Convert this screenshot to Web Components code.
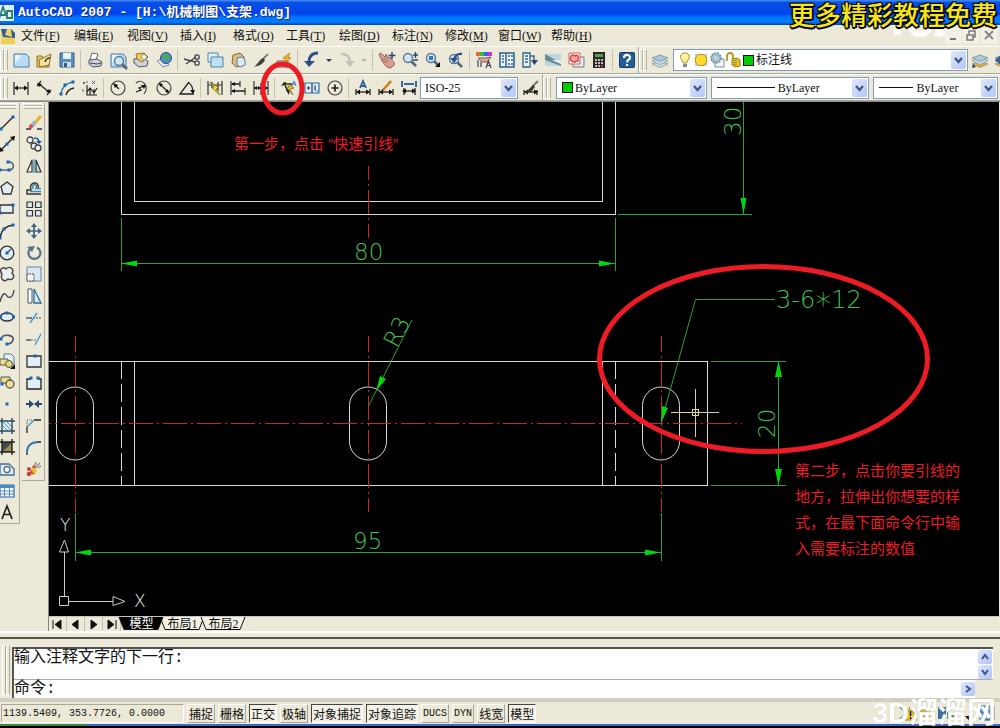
<!DOCTYPE html>
<html lang="zh-CN">
<head>
<meta charset="utf-8">
<title>AutoCAD 2007 - [H:\机械制图\支架.dwg]</title>
<style>
html,body{margin:0;height:100%;background:#000;overflow:hidden}
body{font-family:"Liberation Serif","Noto Sans CJK SC",sans-serif;font-size:12px;color:#111}
</style>
</head>
<body>
<cad-app></cad-app>
<script>
const BLUE = '#1766b8', NAVY = '#27476f', INK = '#222';
const dot = (x, y, c = BLUE) => `<rect x="${x - 1.5}" y="${y - 1.5}" width="3" height="3" fill="${c}"/>`;
const line = (d, c = INK, w = 1.3, f = 'none') => `<path d="${d}" stroke="${c}" stroke-width="${w}" fill="${f}"/>`;
const page = '<path d="M1 2h12l3 3v10H1z" fill="#b9dcf5" stroke="#4a7fae"/><path d="M2 3h7L2 11z" fill="#eaf6ff"/>';
const hArrow = y => line(`M2 ${y}H14`) + `<path d="M1 ${y}l4-2.5v5zM15 ${y}l-4-2.5v5z" fill="#111"/>`;
const lens = (x, y) => line(`M${x + 3} ${y + 3}L${x + 8} ${y + 8}`, '#54677d', 2.6) + `<circle cx="${x}" cy="${y}" r="4.5" fill="#cfe6f5" stroke="#5d7893" stroke-width="1.4"/>`;
const layers = (c) => `<path d="M0 12l8-3 8 3-8 3.500z" fill="${c}" stroke="#777" stroke-width=".6"/><path d="M0 9l8-3 8 3-8 3.500z" fill="#cfe0e6" stroke="#6b8494" stroke-width=".6"/><path d="M0 6l8-3 8 3-8 3.500z" fill="#a9c9da" stroke="#58788c" stroke-width=".6"/>`;

const ICONS = {
  new: page,
  open: '<path d="M1 4h5l1 2h6v9H1z" fill="#e9c65c" stroke="#8d712a"/><path d="M3 8l12-6-2 11-9 2z" fill="#f6e4a0" stroke="#8d712a"/><path d="M9 10c1-3 3-4 5-4" stroke="#333" fill="none" stroke-width="1.500"/>',
  save: '<path d="M1 1h14v14H1z" fill="#5c8fc4" stroke="#2d5b8d"/><path d="M4 1h8v6H4z" fill="#e8f3fb"/><path d="M4 10h8v5H4z" fill="#d3dde8"/><path d="M5 11h3v4H5z" fill="#2d5b8d"/>',
  print: '<path d="M5 1l6 1-2 6H3z" fill="#fff" stroke="#667"/><path d="M2 8l8-1 5 3-1 4-8 1-4-3z" fill="#ccd2dc" stroke="#556"/><path d="M3 11l7 1 4-1" stroke="#445" fill="none"/>',
  preview: page + lens(9, 9),
  publish: '<path d="M1 7l9-1 5 3-1 5-8 1-5-4z" fill="#ccd2dc" stroke="#556"/><path d="M3 2l8-1 4 4-6 5-5-3z" fill="#f0c95a" stroke="#8d712a"/><circle cx="11" cy="5" r="2.500" fill="#fff" stroke="#996"/>',
  dwf: '<path d="M1 9l7-3 5 7-6 2z" fill="#e6e6ec" stroke="#889"/><circle cx="10" cy="6" r="5.500" fill="#4a91d0" stroke="#27527c"/><path d="M7 3c3-2 4 1 6 0 1 3-2 3-2 6-3 0-2-3-5-3z" fill="#57a84d"/>',
  cut: line('M0 7l11 3M2 12l10-7', '#444', 1.4) + '<circle cx="13" cy="5" r="2.200" fill="none" stroke="#445" stroke-width="1.300"/><circle cx="13" cy="11" r="2.200" fill="none" stroke="#445" stroke-width="1.300"/>',
  copyclip: '<path d="M1 1h10v9H1z" fill="#dff0fa" stroke="#4a87a8"/><path d="M4 5h12v10H4z" fill="#bfe1f3" stroke="#4a87a8"/>',
  paste: '<path d="M3 3l7-2 4 4v8l-8 2-4-4z" fill="#dcc080" stroke="#86692f"/><path d="M7 6l5-1 3 3v5l-5 2-3-2z" fill="#dcebf7" stroke="#5b7898"/>',
  match: line('M15 2L9 8', '#666', 1.6) + '<path d="M10 6l2 2c-2 4-6 6-11 7 4-3 5-7 9-9z" fill="#443f3b"/>',
  blocked: '<path d="M1 9h11v6H1z" fill="#fff" stroke="#555"/><path d="M14 1L7 6l3 1-4 6 9-7-3-1z" fill="#f4b51c" stroke="#9a6712" stroke-width=".6"/>',
  undo: line('M14 1C8 1 5 4 5 10', '#2e5087', 2.8) + '<path d="M0 9l11 0-6 6z" fill="#2e5087"/>',
  redo: line('M2 2c6 0 9 3 9 8', '#c2c2bb', 2.6) + '<path d="M16 9H6l5 6z" fill="#c2c2bb"/>',
  tri: '<path d="M5 7h6l-3 3z" fill="#2b3f66"/>',
  tridim: '<path d="M5 7h6l-3 3z" fill="#b5b4ab"/>',
  pan: '<path d="M0 2l2-1 4 4 1-3 2 4 2-1 5 7-4 4c-5 0-7-4-9-7z" fill="#d99c92" stroke="#845048" stroke-width=".8"/>' + line('M3 7l4 4M6 6l3 4', '#845048', .8) + line('M13 0v7M9.500 3.500h7', NAVY, 1.5),
  zoomrt: lens(6, 6) + line('M11 3h5M13.500 0v6M11 8h5', NAVY, 1.4),
  zoomwin: lens(6, 6) + '<path d="M4 4h4v4H4z" fill="#3778b0"/><path d="M15 10v5h-5z" fill="#111"/>',
  zoomprev: lens(6, 7) + line('M14 2C9 1 7 4 6 8', '#2e5087', 2.3) + '<path d="M2 6h8l-4 5z" fill="#2e5087"/>',
  props: '<path d="M0 0h4v4H0z" fill="#e63"/><path d="M4 0h4v4H4z" fill="#3b3"/><path d="M8 0h4v4H8z" fill="#36e"/><path d="M12 0h4v4h-4z" fill="#c3c"/><path d="M2 6h8l5-1-4 5-5 0z" fill="#e0a79c" stroke="#855"/>' + line('M2 8v7M5 10v5M10 16l2.500-7 2.500 7M11 13.500h3', '#345', 1.2),
  dcenter: '<path d="M1 1h14v14H1z" fill="#e9f3fa" stroke="#27618f" stroke-width="1.500"/>' + line('M7 1v14M3 4h2M3 7h2M3 10h2M9 4h2M12 4h2M9 8h2M12 8h2M9 12h2M12 12h2', '#3c6286', 1.5),
  palette: '<path d="M1 1h7v14H1z" fill="#e9f3fa" stroke="#27618f" stroke-width="1.300"/>' + line('M3 4h3M3 7h3M3 10h3M8 4h4v5', '#3c6286', 1.4) + '<path d="M9 8h7l-3.500 5z" fill="#27476f"/>',
  sheet: '<path d="M0 2h16v12H0z" fill="#bdd5e1"/><path d="M0 2l16 9v3L0 8z" fill="#6a8b96"/><path d="M7 8h9v4z" fill="#e7eef0"/>',
  markup: '<path d="M5 5h11v10H5z" fill="#e3ebf2" stroke="#6d7f92"/><path d="M1 1h11v11H1z" fill="#fff" stroke="#d55"/><path d="M3 4c1-2 3-1 4 0 2-2 4 0 3 2 1 2 0 4-2 3-1 2-3 1-4 0-2 0-2-3-1-5z" fill="#f7a9a2" stroke="#d33" stroke-width="1.300"/>',
  calc: '<path d="M2 0h12v16H2z" fill="#2c2626"/><path d="M4 2h8v3H4z" fill="#55a04a"/>' + line('M4 8h2M7 8h2M10 8h2M4 11h2M7 11h2M10 11h2M4 14h2M7 14h2', '#eee', 1.6) + line('M10 14h2', '#e33', 1.6),
  help: '<rect x="0.500" y="0.500" width="15" height="15" rx="1" fill="#235d98" stroke="#123f70"/>' + line('M5 6c0-4 6-4 6-.5C11 8 8 7.500 8 10.500', '#fff', 2.2) + '<rect x="7" y="12" width="2.200" height="2" fill="#fff"/>',
  layer: layers('#c9dbe2'),
  layerset: layers('#e0b13a') + '<path d="M0 16l1-4 3 3z" fill="#223a60"/>',
  layerprev: layers('#e0b13a') + '<path d="M0 8l6-5v10z" fill="#2c5f9f"/>',
  linear: line('M1 2v13M15 2v13', '#333') + hArrow(8),
  aligned: line('M1 6l4-5M11 15l4-5', '#333') + line('M3 4l10 8') + '<path d="M1 3l5 1-3 3zM15 13l-5-1 3-3z" fill="#111"/>',
  arclen: line('M2 14C3 6 7 3 14 2', '#2b78ba') + line('M7 15c1-4 3-6 8-7') + dot(2, 14) + dot(14, 2) + dot(6, 5),
  ordinate: line('M5 5v10h10M5 12l3-4 4 5 3-5M8 15V9M12 15V9', INK, 1.2) + line('M1 2l2 2M3 2L1 4M10 1l3 3M13 1l-3 3M1 9v3M5 1v2', '#567', 1),
  radius: '<circle cx="8" cy="8" r="7" fill="none" stroke="#444" stroke-width="1.200"/>' + line('M9 9L5 5') + '<path d="M3 3l5 2-3 3z" fill="#111"/>',
  jogged: line('M3 3c6-5 14 3 8 11', '#444', 1.2) + line('M3 12l5-2-2-2 5-2') + '<path d="M13 5l-5 0 3 4z" fill="#111"/>',
  diameter: '<circle cx="8" cy="8" r="7" fill="none" stroke="#444" stroke-width="1.200"/>' + line('M4 4l8 8') + '<path d="M3 3l4 1-3 3zM13 13l-4-1 3-3z" fill="#111"/>',
  angular: line('M15 14H1L10 2') + line('M10 3c3 2 4 6 4 10', INK, 1.1) + '<path d="M14 14l-3-4h5z" fill="#111"/>',
  quickdim: line('M1 1v14M15 1v14M1 5h14M5 2v6M11 2v9', '#333', 1.2) + '<path d="M3 2l9 6-3 1 4 6-8-7 2-1z" fill="#f3dc27" stroke="#665d10" stroke-width=".7"/>',
  baseline: line('M1 1v14M10 1v6M15 8v7', '#444') + line('M2 4h8M2 11h13') + '<path d="M1 4l4-2v4zM1 11l4-2v4z" fill="#111"/>',
  continue: line('M1 1v14M8 3v12M15 1v14', '#444') + line('M1 8h14') + '<path d="M1 8l3-2v4zM8 8l-3-2v4zM8 8l3-2v4zM15 8l-3-2v4z" fill="#111"/>',
  qleader: line('M4 4h7M4 5l3 7', INK, 1.5) + '<path d="M0 6l3-4 4 2zM8 15l-3-5 4-1z" fill="#222"/><path d="M4 2l9 6-4 1 3 6-6-7 2-1z" fill="#e3c42c" stroke="#6c5d0e" stroke-width=".7"/>' + line('M11 6l2-5 2 5M12 4h3', '#3a78bb', 1),
  tolerance: '<path d="M1 3h14v10H1z" fill="#dceefa" stroke="#2f71a8" stroke-width="1.200"/>' + line('M8 3v10M11 5.500v5M13 10.500v1M3 8h3M4.500 6.500v3', '#235', 1.2),
  center: '<circle cx="8" cy="8" r="7" fill="none" stroke="#444" stroke-width="1.200"/>' + line('M4.500 8h7M8 4.500v7', INK, 1.7),
  dimtext: line('M1 9v6M15 9v6') + hArrow(12) + line('M5 8l3-7 3 7M6 6h4', '#2d6097', 1.8),
  dimedit: line('M1 9v6M15 9v6') + hArrow(12) + line('M5 10l8-9', '#c9821c', 2.6) + '<path d="M3 12l1-3 2 2z" fill="#333"/>',
  dimupdate: line('M1 1v6M15 1v6M3 4h10', '#356da1', 2) + line('M3 8v7M14 8v7') + hArrow(11),
  dimstyle: line('M1 10v5M14 10v5') + hArrow(12) + line('M15 1l-6 6', '#777', 2) + '<path d="M10 5l2 2-4 5-6 1z" fill="#3d3832"/>',
  bulb: '<path d="M8 1c6 0 5 6 2 8v2H6V9C3 7 2 1 8 1z" fill="#fff69a" stroke="#a49134"/><path d="M6 12h4v3H6z" fill="#889"/>',
  sun: '<path d="M2 2h12v12H2z" fill="#b9d2dc"/><circle cx="8" cy="8" r="5.800" fill="#fbd92e" stroke="#c98f16"/>',
  freeze: '<path d="M6 7h9v8H6z" fill="#f2f7f9" stroke="#71909c"/><circle cx="7" cy="6" r="5" fill="#9fbfce" stroke="#6a8f9f" stroke-width="1.500" stroke-dasharray="2 1"/><circle cx="7" cy="6" r="2" fill="#c9d8c4"/>',
  lock: line('M2 9V4c0-4 6-4 6 0v3', '#b79a1a', 1.8) + '<path d="M7 7l5-1 3 2v6l-5 1-3-2z" fill="#ecc92d" stroke="#927813"/>' + line('M8 9l4-1M8 11l4-1M8 13l4-1', '#927813', .8),
  lineseg: line('M2 14L14 2') + dot(2, 14) + dot(14, 2),
  xline: line('M1 15L15 1') + '<path d="M0 16l1-5 4 4zM16 0l-5 1 4 4z" fill="#111"/>' + dot(8, 8),
  pline: line('M1 12h9M9 4c7-1 7 8 1 8', '#567', 1.6) + dot(9, 4) + dot(1, 12) + dot(10, 12),
  polygon: '<path d="M8 2l6 4.500-2 7.500H4L2 6.500z" fill="#e3eef4" stroke="#333" stroke-width="1.300"/>',
  rect: '<path d="M1 4h13v8H1z" fill="#e3eef4" stroke="#333" stroke-width="1.300"/>' + dot(14, 4) + dot(1, 12),
  arc: line('M1 15C2 8 6 3 14 2') + dot(1, 15) + dot(5, 6) + dot(14, 2),
  circle: '<circle cx="8" cy="8" r="6.800" fill="#e3eef4" stroke="#333" stroke-width="1.300"/>' + line('M8 8l4-4', '#456') + dot(8, 8) ,
  cloud: '<path d="M3 8C-1 3 5 0 7 3c4-4 9 1 6 4 4 4 0 8-4 6-4 4-8 0-6-5z" fill="#e8edf0" stroke="#444" stroke-width="1.400"/>',
  spline: line('M1 14C4 2 7 6 8 8s6 3 7-6', '#444'),
  ellipse: '<ellipse cx="8" cy="8" rx="6.500" ry="4" fill="#e3eef4" stroke="#333" stroke-width="1.300"/>' + dot(1.5, 8) + dot(14.5, 8) + dot(8, 4),
  ellarc: line('M2 8c2-6 14-4 12 1-1 3-4 4-6 4', '#556', 1.7) + dot(2, 8) + dot(8, 13),
  insblock: '<path d="M5 1h7l3 3v7H5z" fill="#e7f2fb" stroke="#4b7fa8"/><path d="M1 6h8v6H1z" fill="#f0e08b" stroke="#555"/><circle cx="10" cy="11" r="3.500" fill="#ead96d" stroke="#555"/><path d="M16 11v5h-5z" fill="#111"/>',
  mkblock: '<path d="M2 3h9v6H2z" fill="#f0e08b" stroke="#555"/><circle cx="11" cy="10" r="4" fill="#f0e08b" stroke="#555" stroke-width="1.300"/>' + dot(3, 10),
  point: dot(8, 8),
  hatch: '<path d="M3 3h10v10H3z" fill="#d9ecf5"/>' + line('M4 4l8 8M4 8l5 5M8 4l5 5', '#5c90ad', 1) + line('M0 3h16M0 13h16M3 0v16M13 0v16', '#2a4c60', 1.4),
  gradient: '<path d="M3 3h10v10H3z" fill="#454a4b"/><path d="M4 12l9-8v9z" fill="#9b8e51"/>' + line('M0 3h16M0 13h16M3 0v16M13 0v16', '#222', 1.4),
  region: '<path d="M1 3h9l5 5v6H1z" fill="#dceefa" stroke="#4b6e88" stroke-width="1.300"/><circle cx="8" cy="8.500" r="3" fill="#fff" stroke="#4b6e88" stroke-width="1.300"/>',
  table: '<path d="M1 2h14v12H1z" fill="#fff" stroke="#2b66a5" stroke-width="1.200"/><path d="M1 2h14v3H1z" fill="#4d8ac2"/>' + line('M1 8h14M1 11h14M5.500 5v9M10.500 5v9', '#4d8ac2', 1),
  mtext: line('M3 15L8 2l5 13M5 10.500h6', '#222', 1.7),
  erase: line('M0 14h5M11 14h5', '#333') + line('M15 1L8 9', '#e5b33a', 3.4) + line('M9 7l-3 4', '#8fb8d8', 4) + line('M6 10l-2 3', '#d9534a', 4),
  copy: '<circle cx="4" cy="4" r="3" fill="#e8f0f4" stroke="#444" stroke-width="1.300"/><circle cx="8" cy="10" r="3" fill="#e8f0f4" stroke="#444" stroke-width="1.300"/><circle cx="12" cy="12" r="3" fill="#e8f0f4" stroke="#444" stroke-width="1.300"/>' + line('M8 2c3 0 5 1 5 4', BLUE, 1.7) + '<path d="M10 5h6l-3 3z" fill="#174f8c"/>',
  mirror: line('M8 1v14', '#3aa0c8', 1.4) + '<path d="M6 2v12H1z" fill="#f4f4f0" stroke="#333" stroke-width="1.200"/><path d="M10 2v12h5z" fill="#c8dce6" stroke="#333" stroke-width="1.200"/>',
  offset: line('M15 14H1v-4h4C2 1 14 1 12 8', '#333', 1.4) + line('M15 11.500H4M7 9c-2-6 5-6 3-.5h5', '#3d8cb5', 1.5),
  array: '<g fill="#dceaf5" stroke="#333" stroke-width="1.200"><path d="M1 1h5.500v5.500H1zM9.500 1H15v5.500H9.500zM1 9.500h5.500V15H1zM9.500 9.500H15V15H9.500z"/></g>',
  move: line('M8 2v12M2 8h12', '#3e6484', 1.7) + '<path d="M8 0l3 4H5zM8 16l3-4H5zM0 8l4-3v6zM16 8l-4-3v6z" fill="#3e6484"/>',
  rotate: line('M5 3a6 6 0 1 0 6-.5', '#55738c', 2.2) + '<path d="M1 2l8-1-3 6z" fill="#55738c"/>',
  scale: '<path d="M1 1h14v14H1z" fill="#dbe6f2" stroke="#6483a6"/><path d="M1 8h7v7H1z" fill="#f4f4f0" stroke="#333" stroke-dasharray="1.500 1"/>',
  stretch: '<path d="M2 1h4v14H2z" fill="#fff" stroke="#456"/><path d="M8 1l7 14H8z" fill="#dceefa" stroke="#2d6c9f" stroke-width="1.300"/>',
  trim: line('M0 8h6', '#345') + line('M7 8h9', '#345', 1.2).replace('fill=', 'stroke-dasharray="2 1" fill=') + line('M4 13l7-10', '#3d9bd0', 1.4),
  extend: line('M0 9h5', '#345') + line('M5 9h6', '#678', 1.2).replace('fill=', 'stroke-dasharray="2 1" fill=') + line('M9 14l6-11', '#3d9bd0', 1.4),
  breakpt: '<path d="M1 3h14v11H1z" fill="#e1eff9" stroke="#333" stroke-width="1.300"/>' + dot(9, 3),
  break: '<path d="M1 4h14v10H1z" fill="#e1eff9"/>' + line('M5 4H1v10h14V4h-3') + dot(5, 3) + dot(12, 3),
  join: line('M0 8h4M12 8h4', NAVY, 2) + '<path d="M3 4l5 4-5 4zM13 4L8 8l5 4z" fill="#27476f"/>',
  chamfer: line('M1 15V9M8 2h7') + line('M1 9l7-7', '#3d9bd0', 1.4) + line('M1 8V2h6', '#555', 1).replace('fill=', 'stroke-dasharray="1 1" fill='),
  fillet: line('M1 15v-3M12 2h3') + line('M1 12C1 6 5 2 12 2', '#2f78ad', 1.8),
  explode: '<g fill="#cf3b2c"><circle cx="3" cy="8" r="2"/><circle cx="7" cy="11" r="2.400"/><circle cx="3" cy="13" r="2.200"/><circle cx="8" cy="6" r="1.700"/></g><path d="M6 8l4-2 1 4-4 3z" fill="#f2c22e"/>' + line('M9 7l5-5M12 7l3-2M9 4l1-3', '#888', 1.5),
  doc: '<path d="M1 1h11l3 4v11H1z" fill="#f1d064"/><path d="M1 1h6l-2 6 7 2-1-8 4 4v5L3 9z" fill="#28629d"/><path d="M1 12l14-2v6H1z" fill="#f2ce57"/>',
  app: '<path d="M0 0h16v16H0z" fill="#e0f2ee"/>' + line('M1 14L5 2l3 8M2 10h6M9 6h5v7H9z', '#267a7a', 1.8),
};

function define(name, html, ready) {
  const template = document.createElement('template');
  template.innerHTML = html;
  customElements.define(name, class extends HTMLElement {
    constructor() {
      super();
      this.attachShadow({ mode: 'open' }).append(template.content.cloneNode(true));
    }
    connectedCallback() { if (ready && !this.done) { this.done = true; ready(this, this.shadowRoot); } }
  });
}

define('cad-icon', `<style>:host{display:block;width:16px;height:16px;flex:none}svg{display:block;width:100%;height:100%;overflow:visible}</style>
<svg viewBox="0 0 16 16" aria-hidden="true"></svg>`,
  (el, root) => { root.querySelector('svg').innerHTML = ICONS[el.getAttribute('name')]; });

define('cad-tool', `<style>
:host{display:block;flex:none;width:23px;height:20px}
:host([narrow]){width:12px}
button{display:flex;align-items:center;justify-content:center;width:100%;height:100%;padding:0;border:0;background:none;overflow:visible}
</style><button type="button"></button>`,
  (el, root) => {
    const button = root.querySelector('button');
    button.setAttribute('aria-label', el.getAttribute('name'));
    button.innerHTML = `<cad-icon name="${el.getAttribute('name')}"></cad-icon>`;
  });

/* A toolbar with a grip, filled from its tools attribute: "|" is a separator. */
define('cad-toolbar', `<style>
:host{display:flex;align-items:center;box-sizing:border-box;background:#ece9d8;border-top:1px solid #fff;border-bottom:1px solid #aca899;min-width:0}
.grip{flex:none;width:2px;height:20px;border:1px solid #fff;border-right-color:#b5b2a2}
.grip+.grip{margin-right:1px}
.sep{flex:none;width:1px;height:20px;margin:0 2px;background:#c5c2b3}
:host([vertical]){flex-direction:column;border:0;border-right:1px solid #aca899;border-bottom:1px solid #aca899}
:host([vertical]) .grip{width:18px;height:1px;border:1px solid #fff;border-bottom-color:#b5b2a2;margin:0}
.tools{display:contents}
:host([vertical]) .tools{display:grid;grid-auto-rows:1fr;width:100%;height:var(--run);justify-items:center;align-items:center;margin-top:3px}
</style><span class="grip"></span><span class="grip"></span><div class="tools"></div><slot></slot>`,
  (el, root) => {
    root.querySelector('.tools').innerHTML = (el.getAttribute('tools') || '').split(' ').filter(Boolean).map(t =>
      t === '|' ? '<span class="sep"></span>' : `<cad-tool name="${t}" ${t.startsWith('tri') ? 'narrow' : ''}></cad-tool>`).join('');
  });

define('cad-combo', `<style>
:host{display:grid;box-sizing:border-box;height:22px;min-width:0;border:1px solid #7f9db9;background:#fff;align-items:center}
select,.lead,.arrow{grid-area:1/1}
select{appearance:none;width:100%;height:20px;border:0;background:none;margin:0;padding:0 18px 0 var(--indent,4px);font:inherit;font-size:12px;color:#111;outline:0}
.lead{display:flex;align-items:center;padding-left:3px;pointer-events:none}
.arrow{justify-self:end;width:15px;height:18px;margin-right:1px;border-radius:2px;background:linear-gradient(135deg,#e0e9ff,#b4c5f6);pointer-events:none}
</style><select></select><span class="lead"><slot></slot></span>
<svg class="arrow" viewBox="0 0 15 18"><path d="M4 7l3.500 4L11 7" fill="none" stroke="#3c5583" stroke-width="2.200"/></svg>`,
  (el, root) => {
    const s = root.querySelector('select');
    s.add(new Option(el.getAttribute('value')));
    s.setAttribute('aria-label', el.getAttribute('label'));
  });

define('cad-titlebar', `<style>
:host{display:flex;align-items:center;gap:4px;height:25px;flex:none;background:linear-gradient(#3a85f2 0 1px,#0a50e4 2px,#0043ee 14px,#0076ff 17px,#007bff 22px,#0a3fae 25px)}
h1{margin:0;font:bold 13px/24px "Liberation Mono","Noto Sans CJK SC",monospace;color:#fff;text-shadow:1px 1px #123070;white-space:pre}
cad-icon{margin-left:-2px}
</style><cad-icon name="app"></cad-icon><h1>AutoCAD 2007 - [H:\\机械制图\\支架.dwg]</h1>`);

define('cad-menubar', `<style>
:host{display:flex;align-items:center;height:21px;flex:none;background:#ece9d8;overflow:hidden}
nav{display:flex;margin-left:5px;flex:1}
a{width:53px;color:#111;text-decoration:none;line-height:20px;white-space:nowrap}
.win{display:flex;gap:2px;margin-right:3px}
.win button{width:16px;height:15px;border:0;padding:0;background:#f4f2e8}
svg{display:block}
.ghost{width:56px;height:20px;margin-right:-4px}
</style><cad-icon name="doc"></cad-icon><nav aria-label="菜单"></nav>
<svg class="ghost" viewBox="0 0 56 20"><path d="M4 0v9M18 0c2 11 16 11 18 0M42 6c5 3 12 0 12-4" stroke="#fbfaf5" stroke-width="7" fill="none"/></svg>
<div class="win"><button aria-label="最小化"><svg width="16" height="15"><path d="M5 11h6" stroke="#777" stroke-width="2"/></svg></button>
<button aria-label="还原"><svg width="16" height="15" fill="none" stroke="#777" stroke-width="1.500"><path d="M4 7h6v5H4zM6 6V3h6v6h-2"/></svg></button>
<button aria-label="关闭"><svg width="16" height="15" stroke="#888" stroke-width="2"><path d="M4 3l8 8M12 3l-8 8"/></svg></button></div>`,
  (el, root) => {
    const items = ['文件F', '编辑E', '视图V', '插入I', '格式O', '工具T', '绘图D', '标注N', '修改M', '窗口W', '帮助H'];
    root.querySelector('nav').innerHTML = items.map(t => `<a href="#">${t.slice(0, 2)}(<u>${t[2]}</u>)</a>`).join('');
  });

define('cad-ribbon', `<style>
:host{display:block;flex:none;position:relative;background:#ece9d8}
.row{display:flex;height:28px;overflow:hidden}
.row+.row{height:27px}
.row>.main{flex:none}
.row>.rest{flex:1;border-left:1px solid #aca899}
cad-combo.iso{width:98px;margin-right:1px}
.rest cad-combo{margin-left:4px;flex:156 1 0}
.rest cad-combo.layer{margin-left:2px;--indent:82px}
cad-combo.color{--indent:18px;flex-grow:148}
cad-combo.weight{flex-grow:122;--indent:42px;margin-right:2px}
cad-combo.type{--indent:66px}
.clip{margin-right:-14px}
i{display:block;width:9px;height:9px;margin-left:2px;background:#0c0;border:1px solid #111}
hr{margin:0 0 0 2px;border:0;height:1px;background:#111;width:58px}
.weight hr{width:34px}
.mark{position:absolute;left:260px;top:15px;width:45px;height:55px;z-index:2;pointer-events:none}
</style>
<div class="row">
 <cad-toolbar class="main" tools="new open save | print preview publish dwf | cut copyclip paste match blocked | undo tri redo tridim | pan zoomrt zoomwin zoomprev | props dcenter palette sheet markup calc | help"></cad-toolbar>
 <cad-toolbar class="rest" tools="layer"><cad-combo class="layer" label="图层" value="标注线"><cad-icon name="bulb"></cad-icon><cad-icon name="sun"></cad-icon><cad-icon name="freeze"></cad-icon><cad-icon name="lock"></cad-icon><i></i></cad-combo><cad-tool name="layerset"></cad-tool><cad-tool class="clip" name="layerprev"></cad-tool></cad-toolbar>
</div>
<div class="row">
 <cad-toolbar class="main" tools="linear aligned arclen ordinate | radius jogged diameter angular | quickdim baseline continue | qleader tolerance center | dimtext dimedit dimupdate"><cad-combo class="iso" label="标注样式" value="ISO-25"></cad-combo><cad-tool name="dimstyle"></cad-tool></cad-toolbar>
 <cad-toolbar class="rest"><cad-combo class="color" label="颜色" value="ByLayer"><i></i></cad-combo><cad-combo class="type" label="线型" value="ByLayer"><hr></cad-combo><cad-combo class="weight" label="线宽" value="ByLayer"><hr></cad-combo></cad-toolbar>
</div>
<svg class="mark" viewBox="0 0 45 55" aria-hidden="true"><ellipse cx="22.500" cy="27.500" rx="19.500" ry="24.500" fill="none" stroke="#ed1c24" stroke-width="5"/></svg>`);

define('cad-drawing', `<style>
:host{display:block;position:relative;background:#000;overflow:hidden;min-height:0}
svg{display:block;position:absolute;inset:0;width:100%;height:100%}
.w{stroke:#d8d8d8}.g{stroke:#2fa03a}.r{stroke:#c8281e;stroke-dasharray:24 4 2 4}.hid{stroke:#d8d8d8;stroke-dasharray:18 5}
.a{fill:#00d80c}
text{font:200 23px "DejaVu Sans",sans-serif;fill:#40c04c}
text.note{font-size:24px}
.star{font-size:32px}
text.ucs{font-size:17px;fill:#eee}
p{position:absolute;margin:0;color:#ed1c24;font-family:"Liberation Sans","Noto Sans CJK SC",sans-serif;font-size:15px;line-height:26px}
.one{left:185px;top:29px;white-space:nowrap}
.two{left:746px;top:356px;width:165px}
</style>
<svg aria-label="支架图纸"><g transform="translate(-49 -102)" fill="none" stroke-width="1" shape-rendering="crispEdges">
 <path class="w" d="M121.500 90V214.500H615.500V90M134.500 90V201.500H602.500V90"/>
 <path class="w" d="M40 361.500H707.500V485.500H40M134.500 361V485M602.500 361V485"/>
 <path class="hid" d="M121.500 361V485M615.500 361V485"/>
 <g class="w" shape-rendering="auto"><rect x="56.500" y="387" width="37" height="73" rx="18.500"/><rect x="349.500" y="387" width="37" height="73" rx="18.500"/><rect x="642.500" y="387" width="37" height="73" rx="18.500"/></g>
 <path class="r" stroke-dashoffset="22" d="M49 423.500H742"/>
 <path class="r" stroke-dashoffset="10" d="M368.500 166V238"/>
 <path class="r" stroke-dashoffset="8" d="M75.500 336V512M368.500 336V512M661 336V512"/>
 <path class="g" d="M121.500 218V271M615.500 218V271M121 263.500H615M743.500 102V214M618 214.500H752M75.500 513V561M661.500 513V561M75 552.500H661M711 361.500H786M711 485.500H786M778.500 361V485"/>
 <path class="g" shape-rendering="auto" d="M368.500 406L412 320M661 423L695.500 299.500H775"/>
 <g class="a" shape-rendering="auto"><path d="M121 263.500l16-3v6zM615 263.500l-16-3v6zM743.500 214l-3-16h6zM75 552.500l16-3v6zM661 552.500l-16-3v6zM778.500 361l-3.500 16h7zM778.500 485l-3.500-16h7zM661 423l1-17 6 2zM376 391l4-15 6 3z"/></g>
 <path stroke="#d5d08a" d="M671 412.500H719M695.500 389V437M692.500 409.500h6v6h-6z"/>
 <g stroke="#ccc" shape-rendering="auto"><path d="M59.500 596.500h9v9h-9zM64.500 596V552M69 601.500H113M59.500 552l5-12 4 12zM113 596.500l12 5-12 4z"/></g>
 <ellipse cx="763.500" cy="359" rx="164" ry="92.500" stroke="#ed1c24" stroke-width="5" shape-rendering="auto"/>
 <g shape-rendering="auto">
 <text x="354" y="260">80</text><text x="353" y="549">95</text>
 <text transform="translate(741 136) rotate(-90)">30</text>
 <text transform="translate(775 438) rotate(-90)">20</text>
 <text transform="translate(397 349) rotate(-63)">R3</text>
 <text class="note" x="776" y="308">3-6<tspan class="star" dy="7">*</tspan><tspan dy="-7">12</tspan></text>
 <text class="ucs" x="60" y="531">Y</text><text class="ucs" x="134" y="607">X</text></g>
</g></svg>
<p class="one">第一步，点击 “快速引线”</p>
<p class="two">第二步，点击你要引线的地方，拉伸出你想要的样式，在最下面命令行中输入需要标注的数值</p>`);

define('cad-tabs', `<style>
:host{display:flex;height:14px;flex:none;background:#ece9d8;border-top:1px solid #c8c5b8}
.nav{width:18px;height:14px;padding:0;border:0;border-right:1px solid #c3c0b2;background:none}
.tab{position:relative;width:41px;height:14px;padding:0;border:0;background:none;font:12px/11px "Liberation Serif","Noto Sans CJK SC",sans-serif;color:#111;white-space:nowrap}
.tab svg{position:absolute;left:-3px;top:0;width:47px;height:14px}
.tab span{position:relative}
.on{color:#fff;z-index:1}
.nav svg{display:block;margin:auto}
</style>`, (el, root) => {
    const nav = ['M4 2v9M12 2v9L6 6.500z', 'M11 2v9L5 6.500z', 'M6 2v9l6-4.500z', 'M5 2v9l6-4.500zM13 2v9'];
    root.innerHTML += nav.map(d => `<button class="nav" aria-label="翻页"><svg width="17" height="13"><path d="${d}" fill="#111" stroke="#111"/></svg></button>`).join('') +
      ['模型', '布局1', '布局2'].map((t, i) => `<button class="tab ${i ? '' : 'on'}"><svg viewBox="0 0 47 14"><path d="M1 0l5 12.500h34L45 0" fill="${i ? '#f3f1e6' : '#000'}" stroke="#111"/></svg><span>${t}</span></button>`).join('');
  });

define('cad-command', `<style>
:host{display:block;flex:none;background:#ece9d8;border-top:2px solid #fff;font:16px/16px "Liberation Mono","Noto Sans CJK SC",monospace}
.frame{display:flex;margin-top:4px;border-top:2px solid #55544e;padding:8px 7px 0 2px}
.grip{flex:none;width:2px;margin-top:-2px;height:48px;border:1px solid #fff;border-right-color:#aca899}
.box{flex:1;margin-left:2px;border-top:2px solid #555;border-left:2px solid #555}
.log{display:flex;background:#fff;height:30px;border-bottom:1px solid #aaa}
.log p{flex:1;margin:0;white-space:pre;line-height:18px}
.scroll{display:flex;flex-direction:column;gap:1px;padding:1px 1px 0}
.entry{display:flex;height:18px;margin-right:18px;background:#fff;align-items:center}
label{white-space:pre;line-height:20px}
input{flex:1;min-width:0;border:0;outline:0;padding:0;height:16px;font:inherit;background:none}
button{width:14px;height:14px;padding:0;border:0;border-radius:2px;background:linear-gradient(135deg,#dfe8ff,#b0c2f6)}
svg{display:block}
.band{height:4px;background:#cfcebf}
</style>
<div class="frame"><span class="grip"></span><span class="grip"></span>
<div class="box"><div class="log"><p>输入注释文字的下一行:</p><div class="scroll">
<button aria-label="向上"><svg width="14" height="14"><path d="M4 9l3-4 3 4" fill="none" stroke="#3c5583" stroke-width="2"/></svg></button>
<button aria-label="向下"><svg width="14" height="14"><path d="M4 5l3 4 3-4" fill="none" stroke="#3c5583" stroke-width="2"/></svg></button></div></div>
<div class="entry"><label for="cmd">命令:</label><input id="cmd"><button aria-label="向右"><svg width="14" height="14"><path d="M5 4l4 3-4 3" fill="none" stroke="#3c5583" stroke-width="2"/></svg></button></div></div></div>
<div class="band"></div>`);

define('cad-status', `<style>
:host{display:block;flex:none;position:relative;background:#ece9d8}
.bar{display:flex;align-items:center;height:22px;padding-left:1px;gap:3px;box-sizing:border-box}
output{box-sizing:border-box;width:183px;height:19px;border:1px solid;border-color:#aca899 #fff #fff #aca899;padding-left:1px;font:10px/18px "Liberation Mono",monospace;white-space:pre;overflow:hidden}
button{box-sizing:border-box;height:19px;padding:0 1px;border:1px solid;border-color:#fff #aca899 #aca899 #fff;background:none;font:12px/15px "Noto Sans CJK SC",sans-serif;color:#111;white-space:nowrap}
button.m{font:10px/15px "Liberation Mono",monospace}
button[aria-pressed=true]{border-color:#444 #fff #fff #444;background:#f3f1e7}
.edge{height:2px;background:linear-gradient(90deg,#3f8a3c 87px,#3a6acb 87px)}
.end{height:2px;background:#000}
.tray{margin-left:auto;padding-right:4px}
.mark{position:absolute;right:4px;bottom:1px;font:bold 29px/28px "Liberation Sans","Noto Sans CJK SC",sans-serif;color:#fff;text-shadow:0 0 1px #bbb8a8;white-space:nowrap}
</style><div class="bar"><output>1139.5409, 353.7726, 0.0000</output></div><div class="edge"></div><div class="end"></div><div class="mark">3D溜溜网</div>`,
  (el, root) => {
    const modes = [['捕捉'], ['栅格'], ['正交', 1], ['极轴'], ['对象捕捉', 1], ['对象追踪', 1], ['DUCS'], ['DYN'], ['线宽'], ['模型', 1]];
    root.querySelector('.bar').insertAdjacentHTML('beforeend', modes.map(([t, on]) =>
      `<button aria-pressed="${!!on}" class="${/^D/.test(t) ? 'm' : ''}">${t}</button>`).join('') +
      `<svg class="tray" width="98" height="18"><path d="M2 3l8 6-8 6" stroke="#3a6fa5" stroke-width="2" fill="none"/><path d="M12 3l7 13H6z" fill="#f5c91d" stroke="#a57c10"/><path d="M12.500 7v5M12.500 13v2" stroke="#111" stroke-width="1.500"/><path d="M22 3h10v12H22z" fill="#c9b25a"/><path d="M40 3h8v12h-8z" fill="#3a6fa5"/><path d="M49 8h8v7h-8z" fill="#3d9b43"/><path d="M67 12h7l-3.500 4z" fill="#111"/><path d="M82 2h14v14H82z" fill="#4f8fc4" stroke="#1f5a92"/></svg>`);
  });

define('cad-app', `<style>
:host{display:flex;flex-direction:column;height:100vh;min-height:480px;position:relative;overflow:hidden;background:#ece9d8}
.work{display:flex;flex:1;min-height:0;border-top:1px solid #8d8787}
.dock{display:flex;flex:none;align-items:flex-start;width:49px;gap:2px;border-right:1px solid #8d8787;box-sizing:border-box;padding-top:1px}
.draw{width:25px;margin-left:-5px;--run:411px}
.edit{width:23px;--run:368px}
.doc{display:flex;flex-direction:column;flex:1;min-width:0;padding-right:1px}
cad-drawing{flex:1}
.banner{position:absolute;right:3px;top:0;font:500 26px/27px "Noto Sans CJK SC",sans-serif;color:#f6e51a;white-space:nowrap;text-shadow:1px 1px #000,-1px -1px #000,1px -1px #000,-1px 1px #000,2px 1px #000,0 2px #000}
</style>
<cad-titlebar></cad-titlebar><cad-menubar></cad-menubar><cad-ribbon></cad-ribbon>
<div class="work"><div class="dock">
<cad-toolbar vertical class="draw" tools="lineseg xline pline polygon rect arc circle cloud spline ellipse ellarc insblock mkblock point hatch gradient region table mtext"></cad-toolbar>
<cad-toolbar vertical class="edit" tools="erase copy mirror offset array move rotate scale stretch trim extend breakpt break join chamfer fillet explode"></cad-toolbar>
</div><div class="doc"><cad-drawing></cad-drawing><cad-tabs></cad-tabs></div></div>
<cad-command></cad-command><cad-status></cad-status>
<div class="banner">更多精彩教程免费</div>`);
</script>
</body>
</html>
